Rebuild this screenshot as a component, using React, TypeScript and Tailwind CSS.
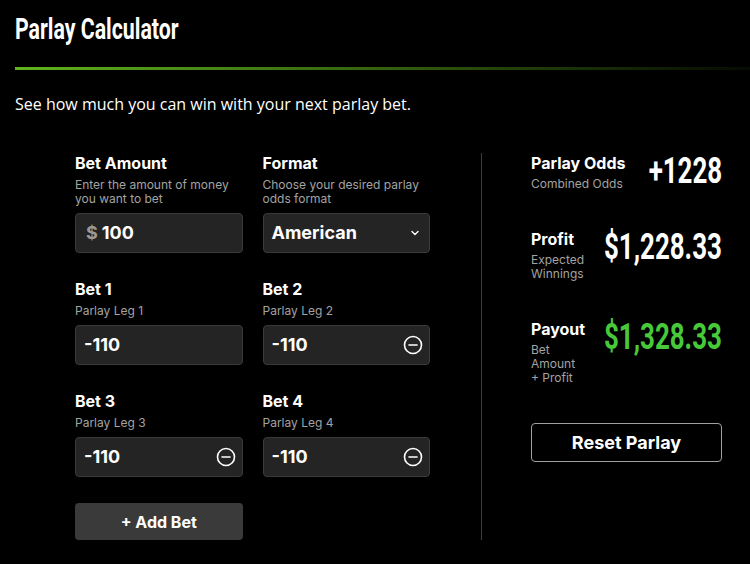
import React from "react";

// no condensed display face offline, so Roboto bold squeezed horizontally
const display = "font-['Roboto',sans-serif] font-bold";

function MinusCircle() {
  return (
    <svg width="20" height="20" viewBox="0 0 20 20" fill="none">
      <circle cx="10" cy="10" r="8.5" stroke="white" strokeWidth="1.6" />
      <line x1="6" y1="10" x2="14" y2="10" stroke="white" strokeWidth="1.6" strokeLinecap="round" />
    </svg>
  );
}

function Field({
  label,
  sub,
  children,
}: {
  label: string;
  sub: React.ReactNode;
  children: React.ReactNode;
}) {
  return (
    <div className="flex flex-col">
      <div className="text-base leading-5 font-bold text-white">{label}</div>
      <div className="mt-[5px] text-xs leading-[14px] text-[#a3a3a3]">{sub}</div>
      <div className="mt-[7px]">{children}</div>
    </div>
  );
}

function BetInput({ value, removable }: { value: string; removable?: boolean }) {
  return (
    <div className="h-10 rounded bg-[#242424] border border-[#3a3a3a] flex items-center justify-between pl-[8px] pr-[6px]">
      <span className="text-lg font-bold text-white">{value}</span>
      {removable && <MinusCircle />}
    </div>
  );
}

function Stat({
  label,
  sub,
  value,
  width,
  green,
}: {
  label: string;
  sub: React.ReactNode;
  value: string;
  width: string;
  green?: boolean;
}) {
  return (
    <div className="flex items-start justify-between">
      <div>
        <div className="text-base leading-5 font-bold text-white whitespace-nowrap">{label}</div>
        <div className="mt-1 text-xs leading-[14px] text-[#a3a3a3]">{sub}</div>
      </div>
      <div className={`${width} flex justify-end`}>
        <span
          className={`${display} shrink-0 text-[36px] leading-9 whitespace-nowrap scale-x-[0.72] origin-right ${
            green ? "text-[#47c93a]" : "text-white"
          }`}
        >
          {value}
        </span>
      </div>
    </div>
  );
}

export default function App() {
  return (
    <div className="min-h-screen bg-black pl-[15px] pt-[11px] font-['Inter',sans-serif]">
      <h1 className="h-9 flex">
        <span className={`${display} text-[29px] leading-9 text-white whitespace-nowrap scale-x-[0.735] origin-left`}>
          Parlay Calculator
        </span>
      </h1>
      <div className="mt-[20px] h-[3px] bg-gradient-to-r from-[#62b31c] via-[#33620f] to-[#060c02]" />
      <p className="mt-[22px] font-['Open_Sans',sans-serif] text-base leading-6 text-white">
        See how much you can win with your next parlay bet.
      </p>

      <div className="mt-[37px] flex">
        <div className="ml-[60px] w-[355px] grid grid-cols-2 gap-x-5 gap-y-[26px] pb-6">
          <Field
            label="Bet Amount"
            sub={
              <>
                Enter the amount of money
                <br />
                you want to bet
              </>
            }
          >
            <div className="h-10 rounded bg-[#242424] border border-[#3a3a3a] flex items-center pl-[10px] gap-1">
              <span className="text-lg font-bold text-[#9a9a9a]">$</span>
              <span className="text-lg font-bold text-white">100</span>
            </div>
          </Field>
          <Field
            label="Format"
            sub={
              <>
                Choose your desired parlay
                <br />
                odds format
              </>
            }
          >
            <div className="h-10 rounded bg-[#242424] border border-[#3a3a3a] flex items-center justify-between pl-[8px] pr-[9px]">
              <span className="text-lg font-bold text-white">American</span>
              <svg width="10" height="10" viewBox="0 0 10 10" fill="none">
                <path d="M2 3.5 L5 6.5 L8 3.5" stroke="white" strokeWidth="1.4" strokeLinecap="round" strokeLinejoin="round" />
              </svg>
            </div>
          </Field>
          <Field label="Bet 1" sub="Parlay Leg 1">
            <BetInput value="-110" />
          </Field>
          <Field label="Bet 2" sub="Parlay Leg 2">
            <BetInput value="-110" removable />
          </Field>
          <Field label="Bet 3" sub="Parlay Leg 3">
            <BetInput value="-110" removable />
          </Field>
          <Field label="Bet 4" sub="Parlay Leg 4">
            <BetInput value="-110" removable />
          </Field>
          <button className="h-[37px] rounded bg-[#3a3a3a] text-base font-bold text-white">
            + Add Bet
          </button>
        </div>

        <div className="ml-[51px] w-px bg-[#3d3d3d] self-stretch mb-6" />

        <div className="ml-[49px] w-[191px] flex flex-col gap-[38px]">
          <Stat label="Parlay Odds" sub="Combined Odds" value="+1228" width="w-[73px]" />
          <Stat
            label="Profit"
            sub={
              <>
                Expected
                <br />
                Winnings
              </>
            }
            value="$1,228.33"
            width="w-[116px]"
          />
          <Stat
            label="Payout"
            sub={
              <>
                Bet
                <br />
                Amount
                <br />+ Profit
              </>
            }
            value="$1,328.33"
            width="w-[116px]"
            green
          />
          <button className="h-[39px] rounded border border-[#a0a0a0] text-lg font-bold text-white">
            Reset Parlay
          </button>
        </div>
      </div>
    </div>
  );
}
